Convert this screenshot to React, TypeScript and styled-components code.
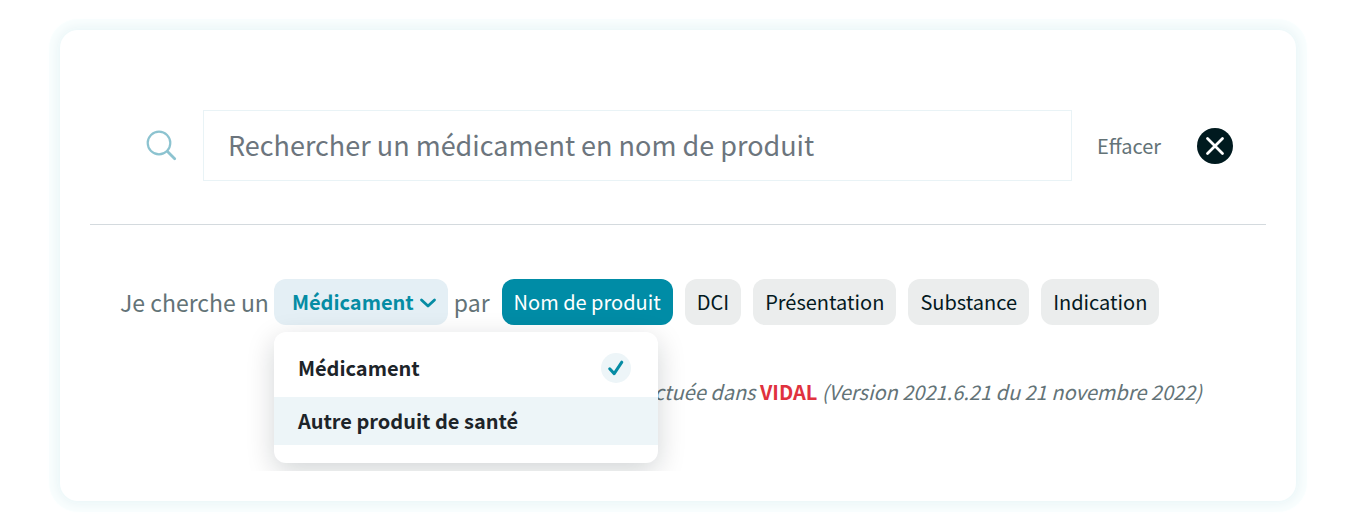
import React, { useState } from 'react';
import styled, { createGlobalStyle } from 'styled-components';

const GlobalStyle = createGlobalStyle`
  *, *::before, *::after { box-sizing: border-box; }
  body {
    margin: 0;
    background: #fff;
    color: #637377;
    font-family: "Source Sans Pro", "Noto Sans CJK SC", sans-serif;
    font-size: 22px;
    line-height: 32px;
  }
  button, input { font: inherit; }
`;

const Page = styled.main`
  padding: 30px 60px;
`;

const Card = styled.section`
  padding: 80px 30px 30px;
  border-radius: 18px;
  background: #fff;
  box-shadow: 0 0 12px 3px #e9f5f7, 0 0 0 11px #fafefe;
`;

const SearchRow = styled.form`
  display: flex;
  align-items: center;
  padding: 0 33px 43px 56px;
  border-bottom: 1px solid #d4dade;
`;

const SearchLabel = styled.label`
  display: flex;
  flex: none;
  margin-right: 26px;
`;

const SearchInput = styled.input`
  flex: 1;
  min-width: 0;
  height: 71px;
  padding: 0 24px 2px;
  border: 1px solid #e9f3f6;
  background: #fff;
  color: #6c757d;
  font-size: 27px;
  outline: none;
  &::placeholder { color: #6c757d; opacity: 1; }
`;

const ClearButton = styled.button`
  display: flex;
  flex: none;
  align-items: center;
  gap: 36px;
  margin-left: 25px;
  padding: 0;
  border: 0;
  background: none;
  color: #637377;
  font-size: 20px;
  cursor: pointer;
`;

const Filters = styled.div`
  padding: 54px 64px 63px 30px;
  overflow: hidden;
`;

const FilterRow = styled.div`
  display: flex;
  align-items: center;
  white-space: nowrap;
  font-size: 23px;
`;

const Dropdown = styled.div`
  position: relative;
  margin: 0 6px 0 5px;
`;

const pill = `
  height: 46px;
  border: 0;
  border-radius: 12px;
  font-size: 20px;
  cursor: pointer;
`;

const Trigger = styled.button`
  ${pill}
  display: flex;
  align-items: center;
  gap: 5px;
  padding: 0 11px 0 18px;
  background: #e4eff5;
  color: #058ca4;
  font-weight: 700;
`;

const Menu = styled.ul`
  position: absolute;
  z-index: 1;
  top: 53px;
  left: 0;
  width: 384px;
  margin: 0;
  padding: 6px 0 18px;
  border-radius: 12px;
  background: #fff;
  box-shadow: 0 8px 28px rgba(0, 20, 25, 0.18);
  list-style: none;
`;

const MenuItem = styled.li<{ $active?: boolean }>`
  display: flex;
  align-items: center;
  justify-content: space-between;
  height: ${p => (p.$active ? 48 : 59)}px;
  padding: 0 27px 0 24px;
  background: ${p => (p.$active ? '#edf5f8' : 'transparent')};
  color: #1d2429;
  font-size: 20px;
  font-weight: 700;
  cursor: pointer;
`;

const Chips = styled.div`
  display: flex;
  gap: 12px;
  margin-left: 12px;
`;

const Chip = styled.button<{ $selected: boolean }>`
  ${pill}
  padding: 0 12px;
  background: ${p => (p.$selected ? '#008ca6' : '#ebeded')};
  color: ${p => (p.$selected ? '#fff' : '#03191e')};
`;

const Source = styled.p`
  margin: 51px 0 0;
  font-size: 20px;
  font-style: italic;
  text-align: right;
`;

const Brand = styled.strong`
  color: #e0323e;
  font-style: normal;
  font-weight: 700;
`;

const SearchIcon = () => (
  <svg width="31" height="32" viewBox="0 0 31 32" fill="none" stroke="#8cc3d0" aria-hidden="true">
    <circle cx="13" cy="13" r="11.3" strokeWidth="2.2" />
    <path d="M21.5 21.5L28.7 28.7" strokeWidth="2.8" strokeLinecap="round" />
  </svg>
);

const CloseIcon = () => (
  <svg width="36" height="36" viewBox="0 0 36 36" aria-hidden="true">
    <circle cx="18" cy="18" r="18" fill="#001a1f" />
    <path d="M10.5 10.5L25.5 25.5M25.5 10.5L10.5 25.5" stroke="#fff" strokeWidth="2.8" strokeLinecap="round" />
  </svg>
);

const ChevronIcon = () => (
  <svg width="18" height="12" viewBox="0 0 18 12" fill="none" aria-hidden="true">
    <path d="M2.5 4L9 10L15.5 4" stroke="#058ca4" strokeWidth="2.8" strokeLinecap="round" strokeLinejoin="round" />
  </svg>
);

const CheckIcon = () => (
  <svg width="30" height="30" viewBox="0 0 30 30" fill="none" aria-label="Sélectionné">
    <circle cx="15" cy="15" r="15" fill="#edf5f8" />
    <path d="M8.7 15.8L13.2 20.6L20.8 9.2" stroke="#058ca4" strokeWidth="3" strokeLinecap="round" strokeLinejoin="round" />
  </svg>
);

const kinds = ['Médicament', 'Autre produit de santé'];
const criteria = ['Nom de produit', 'DCI', 'Présentation', 'Substance', 'Indication'];

export default function App() {
  const [query, setQuery] = useState('');
  const [open, setOpen] = useState(true);
  const [kind, setKind] = useState(kinds[0]);
  const [hovered, setHovered] = useState(kinds[1]);
  const [criterion, setCriterion] = useState(criteria[0]);

  return (
    <>
      <GlobalStyle />
      <Page>
        <Card>
          <SearchRow onSubmit={e => e.preventDefault()}>
            <SearchLabel htmlFor="query" aria-label="Rechercher">
              <SearchIcon />
            </SearchLabel>
            <SearchInput
              id="query"
              type="text"
              value={query}
              onChange={e => setQuery(e.target.value)}
              placeholder="Rechercher un médicament en nom de produit"
            />
            <ClearButton type="button" onClick={() => setQuery('')}>
              Effacer
              <CloseIcon />
            </ClearButton>
          </SearchRow>
          <Filters>
            <FilterRow>
              <span>Je cherche un</span>
              <Dropdown>
                <Trigger type="button" aria-haspopup="listbox" aria-expanded={open} onClick={() => setOpen(!open)}>
                  {kind}
                  <ChevronIcon />
                </Trigger>
                {open && (
                  <Menu role="listbox" aria-label="Type de produit">
                    {kinds.map(k => (
                      <MenuItem
                        key={k}
                        role="option"
                        aria-selected={k === kind}
                        $active={k === hovered}
                        onMouseEnter={() => setHovered(k)}
                        onClick={() => { setKind(k); setOpen(false); }}
                      >
                        {k}
                        {k === kind && <CheckIcon />}
                      </MenuItem>
                    ))}
                  </Menu>
                )}
              </Dropdown>
              <span>par</span>
              <Chips>
                {criteria.map(c => (
                  <Chip key={c} type="button" $selected={c === criterion} aria-pressed={c === criterion} onClick={() => setCriterion(c)}>
                    {c}
                  </Chip>
                ))}
              </Chips>
            </FilterRow>
            <Source>
              Recherche effectuée dans <Brand>VIDAL</Brand> (Version 2021.6.21 du 21 novembre 2022)
            </Source>
          </Filters>
        </Card>
      </Page>
    </>
  );
}
